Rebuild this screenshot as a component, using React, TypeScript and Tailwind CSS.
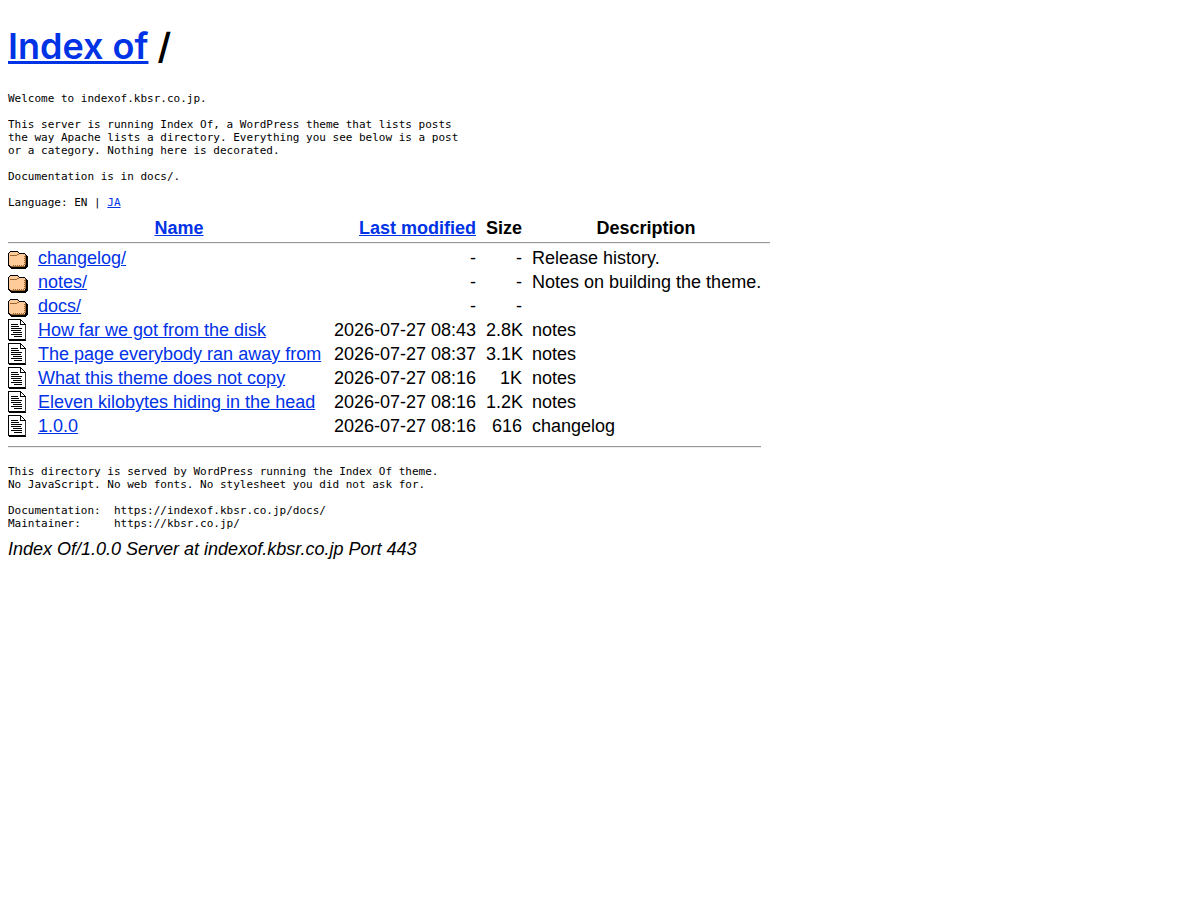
import React from "react";

const entries = [
  { type: "folder", name: "changelog/", modified: "-", size: "-", description: "Release history." },
  { type: "folder", name: "notes/", modified: "-", size: "-", description: "Notes on building the theme." },
  { type: "folder", name: "docs/", modified: "-", size: "-", description: "" },
  { type: "text", name: "How far we got from the disk", modified: "2026-07-27 08:43", size: "2.8K", description: "notes" },
  { type: "text", name: "The page everybody ran away from", modified: "2026-07-27 08:37", size: "3.1K", description: "notes" },
  { type: "text", name: "What this theme does not copy", modified: "2026-07-27 08:16", size: "1K", description: "notes" },
  { type: "text", name: "Eleven kilobytes hiding in the head", modified: "2026-07-27 08:16", size: "1.2K", description: "notes" },
  { type: "text", name: "1.0.0", modified: "2026-07-27 08:16", size: "616", description: "changelog" },
];

const welcome = `Welcome to indexof.kbsr.co.jp.

This server is running Index Of, a WordPress theme that lists posts
the way Apache lists a directory. Everything you see below is a post
or a category. Nothing here is decorated.

Documentation is in docs/.

`;

const footer = `This directory is served by WordPress running the Index Of theme.
No JavaScript. No web fonts. No stylesheet you did not ask for.

Documentation:  https://indexof.kbsr.co.jp/docs/
Maintainer:     https://kbsr.co.jp/`;

const FolderIcon = () => (
  <svg width="20" height="22" viewBox="0 0 20 22" shapeRendering="crispEdges" role="img" aria-label="[DIR]" className="block">
    <path d="M2 4h8v1h1v1h6v1h1v1h1v1h1v11h-1v1h-1v1H3v-1H2v-1H1v-1H0V6h1V5h1z" fill="#000" />
    <path d="M2 5h8v1h1v1h6v1h1v10h-1v1H2v-1H1V6h1z" fill="#ffcc99" />
    <path d="M2 8h7v1H2zM9 7h2v1H9z" fill="#996633" />
    <path d="M17 8h1v10h-1zM3 19h14v1H3z" fill="#996633" />
    <path d="M16 9h1v1h-1zM16 11h1v1h-1zM16 13h1v1h-1zM16 15h1v1h-1zM16 17h1v1h-1zM15 18h1v1h-1zM13 18h1v1h-1zM11 18h1v1h-1zM9 18h1v1H9zM7 18h1v1H7zM5 18h1v1H5z" fill="#996633" />
  </svg>
);

const TextIcon = () => (
  <svg width="20" height="22" viewBox="0 0 20 22" shapeRendering="crispEdges" role="img" aria-label="[TXT]" className="block">
    <path d="M0 0h13v1h1v1h1v1h1v1h1v1h1v17H1v-1H0z" fill="#000" />
    <path d="M1 1h11v5h5v14H1z" fill="#fff" />
    <path d="M13 2h1v1h1v1h1v1h-3z" fill="#fff" />
    <path d="M17 6h1v15h-1z" fill="#333" />
    <path d="M3 5h7v1H3zM3 7h8v1H3zM3 9h11v1H3zM3 11h10v1H3zM5 13h9v1H5zM3 15h11v1H3zM6 17h8v1H6z" fill="#000" />
    <path d="M12 1h1v5h-1zM13 5h4v1h-4z" fill="#000" />
  </svg>
);

const App = () => {
  return (
    <main className="p-2 bg-white text-black font-['Liberation_Sans',Arial,sans-serif] text-[18px] leading-6">
      <h1 className="mt-3.5 mb-[22px] font-['Inter',sans-serif] text-[36px] leading-12 font-semibold">
        <a href="#" className="text-[#0032e6] underline">Index of</a> /
      </h1>

      <pre className="font-['DejaVu_Sans_Mono',monospace] text-[11px] leading-[13px]">
        {welcome}
        {"Language: EN | "}
        <a href="#ja" className="text-[#0032e6] underline">JA</a>
      </pre>

      <table className="mt-[7px] w-[762px] table-fixed border-collapse whitespace-nowrap">
        <colgroup>
          <col className="w-[30px]" />
          <col className="w-[292px]" />
          <col className="w-[156px]" />
          <col className="w-[46px]" />
          <col />
        </colgroup>
        <thead>
          <tr className="h-6">
            <th className="p-0" aria-label="Type" />
            <th className="p-0 pr-2.5 font-bold">
              <a href="#name" className="text-[#0032e6] underline">Name</a>
            </th>
            <th className="p-0 pr-2.5 text-right font-bold">
              <a href="#modified" className="text-[#0032e6] underline">Last modified</a>
            </th>
            <th className="p-0 pr-2.5 text-right font-bold">Size</th>
            <th className="p-0 pr-2.5 font-bold">Description</th>
          </tr>
          <tr>
            <td colSpan={5} className="p-0 py-0.5">
              <hr className="border-t border-b border-t-[#999] border-b-[#eee]" />
            </td>
          </tr>
        </thead>
        <tbody>
          {entries.map((entry) => (
            <tr key={entry.name} className="h-6">
              <td className="p-0">{entry.type === "folder" ? <FolderIcon /> : <TextIcon />}</td>
              <td className="p-0">
                <a href={`#${entry.name}`} className="text-[#0032e6] underline">{entry.name}</a>
              </td>
              <td className="p-0 pr-2.5 text-right">{entry.modified}</td>
              <td className="p-0 pr-2.5 text-right">{entry.size}</td>
              <td className="p-0">{entry.description}</td>
            </tr>
          ))}
          <tr>
            <td colSpan={5} className="p-0 pt-2 pr-[9px]">
              <hr className="border-t border-b border-t-[#999] border-b-[#eee]" />
            </td>
          </tr>
        </tbody>
      </table>

      <pre className="mt-[17px] font-['DejaVu_Sans_Mono',monospace] text-[11px] leading-[13px]">{footer}</pre>

      <address className="mt-[7px] italic">Index Of/1.0.0 Server at indexof.kbsr.co.jp Port 443</address>
    </main>
  );
};

export default App;
